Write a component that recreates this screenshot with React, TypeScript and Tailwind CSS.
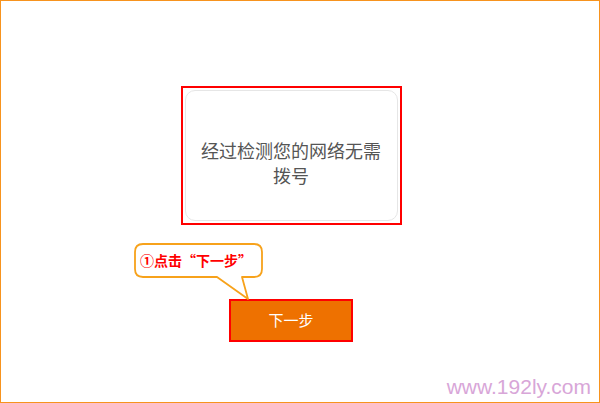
export default function App() {
  return (
    <div className="w-[600px] h-[403px] border border-[#f7931e] bg-white flex flex-col items-center pr-[18px] pt-[85px] font-['Noto_Sans_CJK_SC',sans-serif]">
      <div className="w-[221px] h-[139px] border-2 border-[#ff0000] p-[2px]">
        <div className="h-full rounded-[10px] border border-[#e6e6e6] flex items-center justify-center pt-[14px]">
          <p className="w-[186px] text-[18px] leading-[25px] text-[#555555] text-center">
            经过检测您的网络无需拨号
          </p>
        </div>
      </div>

      <div className="relative mt-[74px]">
        <svg
          className="absolute left-[-95px] top-[-56px]"
          width="130"
          height="58"
          viewBox="0 0 130 58"
        >
          <path
            d="M9 1 H120 Q128 1 128 9 V26 Q128 34 120 34 H108 L114 56 L83 34 H9 Q1 34 1 26 V9 Q1 1 9 1 Z"
            fill="#ffffff"
            stroke="#f7a21b"
            strokeWidth="1.8"
            strokeLinejoin="round"
          />
        </svg>
        <span className="absolute left-[-89px] top-[-48px] whitespace-nowrap text-[14px] leading-[18px] font-bold text-[#ff0000]">
          ①点击“下一步”
        </span>
        <button className="w-[124px] h-[43px] bg-[#ee7100] border-2 border-[#ff0000] text-white text-[15px]">
          下一步
        </button>
      </div>

      <div className="mt-auto self-end mb-[4px] mr-[-10px] font-['Liberation_Sans',sans-serif] text-[21px] leading-[22px] text-[#d8a6d8]">
        www.192ly.com
      </div>
    </div>
  );
}
